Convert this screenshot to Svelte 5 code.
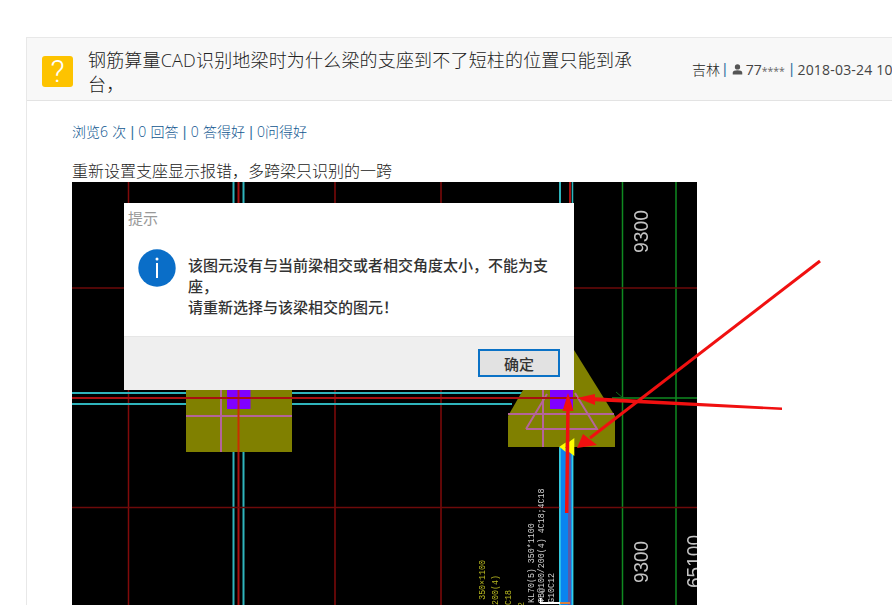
<script>
  const vLines = [
    { x: 56.5, c: '#800a0a', w: 1.5 }, { x: 161.5, c: '#2fb4bc', w: 2 }, { x: 166.5, c: '#a81010', w: 2 },
    { x: 171.5, c: '#2fb4bc', w: 2 }, { x: 263, c: '#800a0a', w: 1.5 }, { x: 369, c: '#800a0a', w: 1.5 },
    { x: 488, c: '#2fb4bc', w: 2 }, { x: 498, c: '#a81010', w: 2 }, { x: 500.5, c: '#2fb4bc', w: 1.5 },
    { x: 550.5, c: '#0f8a20', w: 1.5 }, { x: 604, c: '#0f8a20', w: 1.5 }
  ];
  const hLines = [
    { y: 106, c: '#6d0a0a', w: 1.5 },
    { y: 325.5, c: '#6d0a0a', w: 1.5 }
  ];
</script>

<div class="page">
  <section class="panel">
    <header class="head">
      <div class="badge" aria-hidden="true">?</div>
      <h1>钢筋算量CAD识别地梁时为什么梁的支座到不了短柱的位置只能到承台，</h1>
      <div class="meta">
        <span class="place">吉林</span><i>|</i>
        <svg class="user" viewBox="0 0 12 12" width="11" height="11"><circle cx="6" cy="3.2" r="2.9" fill="#555"/><path d="M0.8 11.5V9.6C0.8 7.6 3.2 6.9 6 6.9s5.200.7 5.200 2.700v1.900z" fill="#555"/></svg>
        <span>77<small>****</small></span><i class="second">|</i>
        <span class="date">2018-03-24 10:25</span>
      </div>
    </header>
    <div class="body">
      <p class="stats">浏览6 次 <i>|</i> 0 回答 <i>|</i> 0 答得好 <i>|</i> 0问得好</p>
      <p class="desc">重新设置支座显示报错，多跨梁只识别的一跨</p>
      <div class="shot">
        <svg class="cad" viewBox="0 0 625 423" width="625" height="423">
          <rect width="625" height="423" fill="#000"/>
          {#each vLines as l}<line x1={l.x} x2={l.x} y1="0" y2="423" stroke={l.c} stroke-width={l.w}/>{/each}
          {#each hLines as l}<line x1="0" x2="625" y1={l.y} y2={l.y} stroke={l.c} stroke-width={l.w}/>{/each}
          <line x1="0" x2="450" y1="211" y2="211" stroke="#2fb4bc" stroke-width="2"/>
          <line x1="0" x2="440" y1="222" y2="222" stroke="#2fb4bc" stroke-width="2"/>
          <line x1="540" x2="625" y1="216" y2="216" stroke="#0f8a20" stroke-width="1.500"/>
          <line x1="544" x2="551" y1="210" y2="216" stroke="#0f6a1a" stroke-width="1"/>

          <rect x="114" y="200" width="106" height="70" fill="#808000"/>
          <line x1="114" x2="220" y1="234" y2="234" stroke="#b5649a" stroke-width="2"/>
          <line x1="149" x2="149" y1="200" y2="270" stroke="#b5649a" stroke-width="2"/>
          <line x1="166.500" x2="166.500" y1="200" y2="270" stroke="#c83000" stroke-width="2"/>
          <rect x="155" y="200" width="23.500" height="27" fill="#8000ff"/>
          <line x1="166.500" x2="166.500" y1="200" y2="227" stroke="#c0103a" stroke-width="2"/>

          <path d="M436 265V234L474 168H502L543 234V265Z" fill="#808000"/>
          <path d="M454 247L475 212 M454 247H525L503 211 M436 232H542 M471 200V265" fill="none" stroke="#b5649a" stroke-width="2"/>
          <rect x="478" y="200" width="23" height="27" fill="#8000ff"/>
          <line x1="0" x2="505" y1="216" y2="216" stroke="#a81010" stroke-width="2"/>

          <rect x="488" y="266" width="12" height="157" fill="#0a84f0"/>
          <line x1="488" x2="488" y1="266" y2="423" stroke="#35d0e8" stroke-width="1.500"/>
          <line x1="500.500" x2="500.500" y1="266" y2="423" stroke="#35d0e8" stroke-width="1.500"/>
          <line x1="497.500" x2="497.500" y1="266" y2="423" stroke="#5a5aa8" stroke-width="3"/>
          <path d="M487.300 264.700L493.700 260.500V270Z" fill="#ffff00"/>
          <path d="M497 260L502.300 256V274L497 270Z" fill="#ffff00"/>

          <g class="labels">
            <text class="dim" textLength="43" lengthAdjust="spacingAndGlyphs" transform="translate(576 71) rotate(-90)">9300</text>
            <text class="dim" textLength="42" lengthAdjust="spacingAndGlyphs" transform="translate(576 401) rotate(-90)">9300</text>
            <text class="dim" textLength="53" lengthAdjust="spacingAndGlyphs" transform="translate(629 406) rotate(-90)">65100</text>
            <text class="note white" transform="translate(462 421) rotate(-90)">KL70(5) 350*1100</text>
            <text class="note white" transform="translate(472 421) rotate(-90)">ΦB@100/200(4) 4C18;4C18</text>
            <text class="note white" transform="translate(482 421) rotate(-90)">G10C12</text>
            <text class="note yel" text-anchor="end" transform="translate(413 378) rotate(-90)">(5) 350×1100</text>
            <text class="note yel" text-anchor="end" transform="translate(426 393) rotate(-90)">0/200(4)</text>
            <text class="note yel" text-anchor="end" transform="translate(439 408) rotate(-90)">4C18</text>
            <text class="note yel" text-anchor="end" transform="translate(452 420) rotate(-90)">2</text>
          </g>
          <rect x="468" y="420" width="20" height="2" fill="#fff"/>
          <rect x="468" y="416" width="1.500" height="6" fill="#fff"/>
          <rect x="488" y="420" width="10" height="2" fill="#d88040"/>
        </svg>

        <div class="dialog">
          <div class="d-title">提示</div>
          <div class="d-main">
            <svg class="info" viewBox="0 0 38 38" width="38" height="38"><circle cx="19" cy="19" r="18.700" fill="#0a6ec8"/><circle cx="19" cy="10" r="1.500" fill="#fff"/><rect x="18" y="14" width="2" height="15" fill="#fff"/></svg>
            <p>该图元没有与当前梁相交或者相交角度太小，不能为支座，<br/>请重新选择与该梁相交的图元！</p>
          </div>
          <div class="d-foot"><button>确定</button></div>
        </div>
      </div>
    </div>
  </section>

  <svg class="arrows" viewBox="0 0 892 605" width="892" height="605">
    <line x1="820" y1="261" x2="590" y2="438" stroke="#f01010" stroke-width="3"/>
    <path d="M577 448L583 434L597 445Z" fill="#f01010"/>
    <path d="M782 407.500L782 410L590 401L590 397Z" fill="#f01010"/>
    <path d="M577 398L595 394V405Z" fill="#f01010"/>
    <line x1="566.700" y1="513" x2="568" y2="405" stroke="#f01010" stroke-width="3.500"/>
    <path d="M568 393L562.500 411L573.500 411Z" fill="#f01010"/>
  </svg>
</div>

<style>
  :global(body) { margin: 0; background: #fff; }
  :global(html), :global(body) { overflow: hidden; }
  .page {
    position: relative;
    width: 892px;
    height: 605px;
    overflow: hidden;
    padding: 37px 0 0 26px;
    box-sizing: border-box;
    font-family: "Open Sans", "Noto Sans CJK SC", sans-serif;
    color: #333;
  }
  .panel {
    width: 1100px;
    height: 600px;
    border: 1px solid #e8e8e8;
    box-sizing: border-box;
  }
  .head {
    display: flex;
    height: 62px;
    background: #f8f8f8;
    border-bottom: 1px solid #e3e3e3;
    box-sizing: content-box;
  }
  .badge {
    width: 31px;
    height: 31px;
    margin: 18px 0 0 15px;
    flex: none;
    background: #fdc300;
    border-radius: 3px;
    color: #fff;
    font: 300 31px/31px Roboto, sans-serif;
    text-align: center;
  }
  h1 {
    width: 552px;
    margin: 10px 0 0 15px;
    flex: none;
    font: 300 18px/24px "Open Sans", "Noto Sans CJK SC", sans-serif;
    letter-spacing: 0.18px;
    color: #222;
  }
  .meta {
    display: flex;
    align-items: center;
    margin: 21px 0 0 52px;
    height: 20px;
    font-size: 14px;
    white-space: nowrap;
    color: #444;
  }
  .place { font-weight: 300; color: #222; }
  .meta i, .stats i {
    font: normal 14px "Liberation Sans", sans-serif;
    color: #34729f;
  }
  .meta i { margin: 0 5px 0 3px; }
  .meta i.second { margin: 0 3px 0 5px; }
  .meta small { font-size: 10.500px; color: #666; }
  .date { margin-left: 1px; letter-spacing: 0.2px; }
  .user { margin-right: 3px; }
  .body { padding: 21px 0 0 45px; }
  .stats {
    margin: 0;
    font-size: 14px;
    font-weight: 300;
    line-height: 20px;
    word-spacing: 0.6px;
    color: #0f568f;
  }
  .desc {
    margin: 19px 0 1px;
    font-size: 16px;
    font-weight: 300;
    line-height: 20px;
    color: #222;
  }
  .shot {
    position: relative;
    width: 625px;
    height: 423px;
  }
  .cad { display: block; filter: blur(0.4px); }
  .dim { font: 21px "Liberation Sans", sans-serif; fill: #c4c4c4; }
  .note { font: 8.300px "Liberation Mono", monospace; }
  .white { fill: #d0d0d0; }
  .yel { fill: #b8b820; }
  .dialog {
    position: absolute;
    left: 52px;
    top: 21px;
    width: 450px;
    height: 187px;
    background: #fff;
    display: flex;
    flex-direction: column;
    font-family: "Noto Sans CJK SC", sans-serif;
  }
  .d-title {
    height: 27px;
    padding: 5px 0 0 4px;
    box-sizing: border-box;
    font-size: 15px;
    line-height: 20px;
    color: #999;
  }
  .d-main {
    flex: 1;
    display: flex;
    padding: 19px 0 0 14px;
  }
  .info { flex: none; }
  .d-main p {
    margin: 5px 0 0 12px;
    width: 372px;
    font-size: 15px;
    line-height: 21px;
    font-weight: 500;
    color: #333;
  }
  .d-foot {
    height: 54px;
    background: #efefef;
    border-top: 1px solid #e6e6e6;
    box-sizing: border-box;
    display: flex;
    justify-content: flex-end;
    padding: 12px 14px 0 0;
  }
  button {
    width: 82px;
    height: 28px;
    padding: 0;
    border: 2px solid #0b72c6;
    background: #e2e2e2;
    font: 500 15px "Noto Sans CJK SC", sans-serif;
    color: #333;
  }
  .arrows {
    position: absolute;
    left: 0;
    top: 0;
    pointer-events: none;
  }
</style>
